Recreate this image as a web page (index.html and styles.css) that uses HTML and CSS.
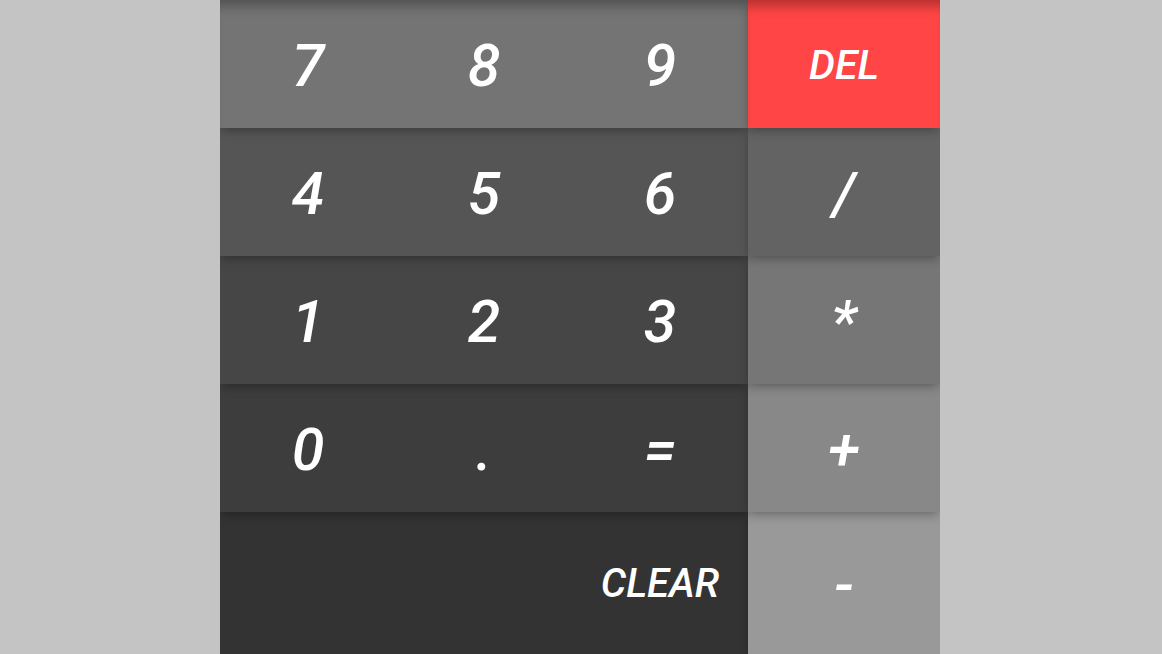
FILE: index.html
```html
<!DOCTYPE html>
<html>
<head>
<meta charset="utf-8">
<link rel="stylesheet" href="styles.css">
</head>
<body>
<div class="calc">
  <div class="numbers">
    <div class="row r1"><div class="key">7</div><div class="key">8</div><div class="key">9</div></div>
    <div class="row r2"><div class="key">4</div><div class="key">5</div><div class="key">6</div></div>
    <div class="row r3"><div class="key">1</div><div class="key">2</div><div class="key">3</div></div>
    <div class="row r4"><div class="key">0</div><div class="key">.</div><div class="key">=</div></div>
    <div class="row r5"><div class="key"></div><div class="key"></div><div class="key clear">CLEAR</div></div>
  </div>
  <div class="ops">
    <div class="op o1 del">DEL</div>
    <div class="op o2">/</div>
    <div class="op o3">*</div>
    <div class="op o4">+</div>
    <div class="op o5">-</div>
  </div>
</div>
</body>
</html>
```
FILE: styles.css
```css
html, body {
  margin: 0;
  padding: 0;
  height: 100%;
  background: #c4c4c4;
  overflow: hidden;
}
.calc {
  margin-left: 220px;
  width: 720px;
  height: 654px;
  display: grid;
  grid-template-columns: 528px 192px;
  overflow: hidden;
  font-family: Roboto, "Liberation Sans", sans-serif;
  font-style: italic;
  font-weight: 500;
  color: #fff;
}
.numbers, .ops {
  display: flex;
  flex-direction: column;
  height: 654px;
}
.row {
  height: 128px;
  flex: none;
  display: grid;
  grid-template-columns: repeat(3, 1fr);
  position: relative;
  box-shadow: 0 4px 10px -2px rgba(0,0,0,0.35);
}
.row.r5, .op.o5 { flex: 1; height: auto; }
.key, .op {
  display: flex;
  align-items: center;
  justify-content: center;
  font-size: 59px;
  line-height: 1;
  padding-top: 2px;
  box-sizing: border-box;
}
.r1 { background: #747474; z-index: 5; box-shadow: 0 4px 10px -2px rgba(0,0,0,0.35), inset 0 14px 12px -8px rgba(0,0,0,0.3); }
.r2 { background: #555555; z-index: 4; }
.r3 { background: #464646; z-index: 3; }
.r4 { background: #3d3d3d; z-index: 2; }
.r5 { background: #333333; z-index: 1; }
.key.clear { font-size: 40px; }
.op {
  height: 128px;
  flex: none;
  position: relative;
  box-shadow: 0 4px 10px -2px rgba(0,0,0,0.35);
}
.o1 { background: #ff4545; z-index: 5; font-size: 41px; box-shadow: 0 4px 10px -2px rgba(0,0,0,0.35), inset 0 14px 12px -8px rgba(0,0,0,0.3); }
.o2 { background: #636363; z-index: 4; }
.o3 { background: #767676; z-index: 3; }
.o4 { background: #888888; z-index: 2; }
.o5 { background: #999999; z-index: 1; }
```
